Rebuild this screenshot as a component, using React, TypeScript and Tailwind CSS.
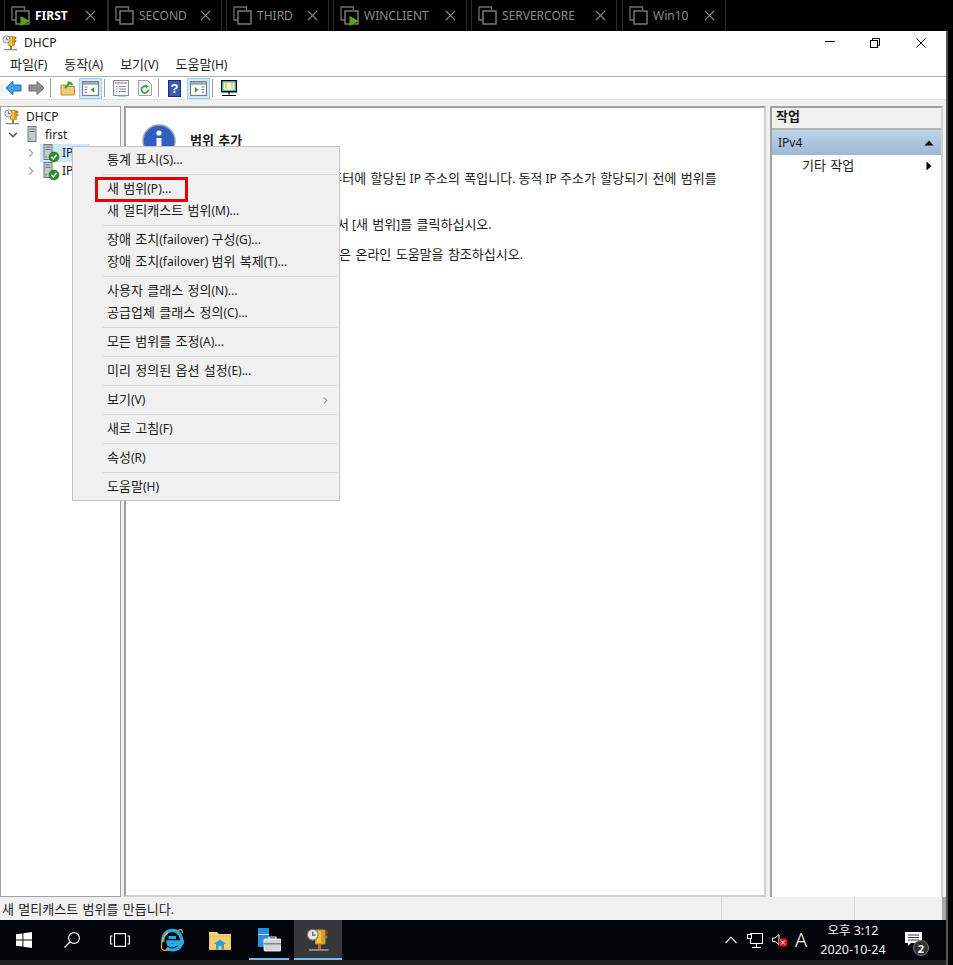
import { ChevronDown, ChevronRight, X } from "lucide-react";

const tabs = [
  { name: "FIRST", width: "w-[104px]", gap: "mr-0", close: "pr-[8px]", running: true, active: true },
  { name: "SECOND", width: "w-[114px]", gap: "mr-[4px]", close: "pr-[7px]" },
  { name: "THIRD", width: "w-[103px]", gap: "mr-[4px]", close: "pr-[7px]" },
  { name: "WINCLIENT", width: "w-[134px]", gap: "mr-[4px]", close: "pr-[7px]", running: true },
  { name: "SERVERCORE", width: "w-[146px]", gap: "mr-[5px]", close: "pr-[7px]" },
  { name: "Win10", width: "w-[104px]", gap: "mr-0", close: "pr-[7px]" },
];

// Malgun hangul runs wider than Noto at the same size, so hangul gets 13px
function T({ children }: { children: string }) {
  const parts = children.split(/([\uac00-\ud7a3]+(?: [\uac00-\ud7a3]+)*)/);
  return (
    <>
      {parts.map((part, i) =>
        i % 2 === 1 ? (
          <span key={i} className="text-[13px] [word-spacing:1px]">
            {part}
          </span>
        ) : (
          part
        ),
      )}
    </>
  );
}

function TabIcon({ running }: { running?: boolean }) {
  return (
    <svg width="20" height="20" viewBox="0 0 20 20" className="shrink-0" fill="none">
      <path d="M5 14H1V1H13.5V4" stroke="#6f6f6f" strokeWidth="1.3" />
      <rect x="5" y="5" width="13" height="13" stroke="#8a8a8a" strokeWidth="1.3" />
      {running ? <path d="M9.5 10L19 15L9.5 20Z" fill="#57a51b" /> : null}
    </svg>
  );
}

function Tab({ tab }: { tab: (typeof tabs)[number] }) {
  return (
    <div className={`${tab.width} ${tab.gap} ${tab.close} flex h-[31px] shrink-0 items-center border-x border-[#2b2b2b] pl-[6px]`}>
      <TabIcon running={tab.running} />
      <span className={`ml-[4px] truncate text-[12px] ${tab.active ? "font-bold text-white" : "text-[#8b8b8b]"}`}>{tab.name}</span>
      <X size={17} strokeWidth={1.6} className="ml-auto shrink-0 text-[#8a8a8a]" />
    </div>
  );
}

function DhcpIcon({ size = 16 }: { size?: number }) {
  return (
    <svg width={size} height={size} viewBox="0 0 16 16" className="shrink-0">
      <rect x="6" y="1" width="7" height="10" rx="1" fill="#d99b22" />
      <rect x="7" y="2" width="3" height="8" fill="#f3c548" />
      <circle cx="4.5" cy="4.5" r="3.6" fill="#e5e5e5" stroke="#777" strokeWidth="0.8" />
      <path d="M4.5 2.5V4.7H6.3" stroke="#555" strokeWidth="0.8" fill="none" />
      <circle cx="13.5" cy="3" r="1" fill="#d9352a" />
      <circle cx="13.5" cy="6" r="1" fill="#4b9e3a" />
      <rect x="8" y="11" width="2" height="3" fill="#a8761b" />
      <rect x="2" y="14" width="13" height="1.3" fill="#8a8a8a" />
    </svg>
  );
}

function ServerIcon({ ok }: { ok?: boolean }) {
  return (
    <svg width="18" height="19" viewBox="0 0 18 19" className="shrink-0">
      <rect x="2" y="0.5" width="8" height="15" fill="#c5c9cc" stroke="#70767a" />
      <rect x="3.5" y="2.5" width="5" height="1" fill="#6f7579" />
      <rect x="3.5" y="5" width="5" height="1" fill="#6f7579" />
      <rect x="3.5" y="12" width="1.5" height="1.5" fill="#5bb04a" />
      {ok ? (
        <>
          <circle cx="12" cy="13" r="5" fill="#2f8f2f" stroke="#1c6b1c" strokeWidth="0.6" />
          <path d="M9.5 13L11.3 15L14.5 11" stroke="#fff" strokeWidth="1.4" fill="none" />
        </>
      ) : null}
    </svg>
  );
}

function ToolbarIcons() {
  return (
    <div className="flex h-[22px] items-center pl-[5px]">
      <svg width="17" height="16" viewBox="0 0 17 16">
        <path d="M8 1.5V5H16V11H8V14.5L1 8Z" fill="#3ea2e8" stroke="#1f6fb5" strokeWidth="1" />
      </svg>
      <svg width="17" height="16" viewBox="0 0 17 16" className="ml-[6px]">
        <path d="M9 1.5V5H1V11H9V14.5L16 8Z" fill="#8e8e8e" stroke="#6e6e6e" strokeWidth="1" />
      </svg>
      <div className="ml-[5px] h-[18px] w-px bg-[#a0a0a0]" />
      <svg width="16" height="16" viewBox="0 0 16 16" className="ml-[9px]">
        <path d="M1 5H6L7 6.5H14.5V15H1Z" fill="#eccb75" stroke="#b59238" />
        <path d="M5 8L10 2.5M10 2.5L7.5 2.5M10 2.5L12.5 5" stroke="#3e9a32" strokeWidth="2" fill="none" />
      </svg>
      <div className="ml-[3px] flex h-[21px] w-[23px] items-center justify-center border border-[#99d1ff] bg-[#cce8ff]">
        <svg width="17" height="15" viewBox="0 0 16 14">
          <rect x="0.5" y="0.5" width="15" height="13" fill="#fff" stroke="#777" />
          <rect x="1" y="1" width="14" height="2.5" fill="#9aa6ad" />
          <path d="M2.5 5.5H5M2.5 8H5M2.5 10.5H5" stroke="#4a84bd" strokeWidth="1" />
          <path d="M11.5 5.5V11L8 8.2Z" fill="#35a03a" />
        </svg>
      </div>
      <div className="ml-[2px] h-[18px] w-px bg-[#a0a0a0]" />
      <svg width="16" height="17" viewBox="0 0 16 17" className="ml-[8px]">
        <rect x="0.5" y="0.5" width="15" height="15" fill="#f4f4f4" stroke="#8a8f93" />
        <rect x="2" y="2" width="12" height="2" fill="#b6bcc0" />
        <path d="M3 6.5H4.5M6 6.5H13M3 9H4.5M6 9H13M3 11.5H4.5M6 11.5H13" stroke="#8f959a" />
        <rect x="5" y="15" width="8" height="1.5" fill="#5aa7e0" />
      </svg>
      <svg width="14" height="16" viewBox="0 0 14 16" className="ml-[9px]">
        <path d="M0.5 0.5H9.5L13.5 4.5V15.5H0.5Z" fill="#f4f4f4" stroke="#a5a5a5" />
        <path d="M10.3 9.5A3.4 3.4 0 1 1 8.8 6.7" stroke="#3da343" strokeWidth="1.8" fill="none" />
        <path d="M7.5 4.6L10.8 6.3L7.8 8.4Z" fill="#3da343" />
      </svg>
      <div className="ml-[6px] h-[18px] w-px bg-[#a0a0a0]" />
      <div className="ml-[9px] flex h-[17px] w-[13px] items-center justify-center border border-[#1d2c7c] bg-[#3f58b4] text-[13px] font-bold leading-none text-white [font-family:'Liberation_Sans',sans-serif]">
        ?
      </div>
      <div className="ml-[6px] flex h-[21px] w-[23px] items-center justify-center border border-[#99d1ff] bg-[#cce8ff]">
        <svg width="17" height="15" viewBox="0 0 16 14">
          <rect x="0.5" y="0.5" width="15" height="13" fill="#fff" stroke="#777" />
          <rect x="1" y="1" width="14" height="2.5" fill="#9aa6ad" />
          <path d="M11 5.5H13.5M11 8H13.5M11 10.5H13.5" stroke="#4a84bd" strokeWidth="1" />
          <path d="M4.5 5.5V11L8 8.2Z" fill="#35a03a" />
        </svg>
      </div>
      <div className="ml-[2px] h-[18px] w-px bg-[#a0a0a0]" />
      <svg width="16" height="17" viewBox="0 0 16 17" className="ml-[8px]">
        <rect x="0.75" y="0.75" width="14.5" height="11" fill="#fff" stroke="#000" strokeWidth="1.5" />
        <rect x="2" y="2" width="12" height="8.5" fill="#f8f3b0" stroke="#27d0dc" />
        <path d="M5 3.5V9M11 3.5V9" stroke="#777" strokeDasharray="1 1" />
        <path d="M8 12V14.5M1 15.5H15" stroke="#000" strokeWidth="1.2" />
      </svg>
    </div>
  );
}

function TreePane() {
  return (
    <div className="h-full w-[121px] shrink-0 border border-[#a0a0a0] bg-white pt-px text-[12px] text-[#1a1a1a]">
      <div className="flex h-[18px] items-center pl-[3px]">
        <DhcpIcon />
        <span className="ml-[6px]">DHCP</span>
      </div>
      <div className="flex h-[18px] items-center pl-[5px]">
        <ChevronDown size={14} strokeWidth={2.2} className="text-[#444]" />
        <div className="ml-[6px] flex w-[15px]"><ServerIcon /></div>
        <span className="ml-[4px]">first</span>
      </div>
      <div className="flex h-[18px] items-center pl-[23px]">
        <ChevronRight size={14} strokeWidth={2} className="text-[#a6a6a6]" />
        <div className="ml-[2px] flex h-[18px] w-[50px] items-center bg-[#cce8ff] pl-[2px]">
          <ServerIcon ok />
          <span className="ml-[2px]">IPv4</span>
        </div>
      </div>
      <div className="flex h-[18px] items-center pl-[23px]">
        <ChevronRight size={14} strokeWidth={2} className="text-[#a6a6a6]" />
        <div className="ml-[4px] flex items-center">
          <ServerIcon ok />
          <span className="ml-[2px]">IPv6</span>
        </div>
      </div>
    </div>
  );
}

function CenterPane() {
  return (
    <div className="ml-[3px] h-full w-[642px] shrink-0 border-2 border-[#a0a0a0] border-b-[#d0d0d0] border-r-[#d0d0d0] bg-white pl-[16px] pt-[16px] text-[12px] text-[#1a1a1a]">
      <div className="flex items-center">
        <svg width="34" height="34" viewBox="0 0 34 34" className="shrink-0">
          <circle cx="17" cy="17" r="16" fill="#2f5fc0" stroke="#9aa3ad" strokeWidth="1.5" />
          <circle cx="17" cy="9" r="2.6" fill="#fff" />
          <rect x="14.5" y="14" width="5" height="13" fill="#fff" />
        </svg>
        <span className="ml-[14px] font-bold"><T>범위 추가</T></span>
      </div>
      <div className="ml-[48px] mt-[10px] whitespace-nowrap leading-[20px]">
        <p>
          <T>범위는 서브네트워크의 컴퓨터에 할당된 IP 주소의 폭입니다. 동적 IP 주소가 할당되기 전에 범위를</T>
          <br />
          <T>만들어야 합니다.</T>
        </p>
        <p className="mt-[4px]"><T>범위를 추가하려면 [동작]에서 [새 범위]를 클릭하십시오.</T></p>
        <p className="mt-[9px]"><T>범위 설정 관련 자세한 내용은 온라인 도움말을 참조하십시오.</T></p>
      </div>
    </div>
  );
}

function ActionPane() {
  return (
    <div className="ml-[4px] h-full w-[173px] shrink-0 border-2 border-b-0 border-[#a0a0a0] border-r-[#d0d0d0] bg-white text-[12px] text-[#1a1a1a]">
      <div className="flex h-[22px] items-center border-b-2 border-[#b5b5b5] bg-[#f0f0f0] pb-[2px] pl-[4px] font-bold"><T>작업</T></div>
      <div className="flex h-[25px] items-center justify-between bg-gradient-to-b from-[#bdd4ea] to-[#9db8d6] pl-[6px] pr-[7px]">
        <span>IPv4</span>
        <svg width="10" height="6" viewBox="0 0 10 6"><path d="M0.5 5.5H9.5L5 0.5Z" fill="#000" /></svg>
      </div>
      <div className="flex h-[22px] items-center justify-between pl-[30px] pr-[9px]">
        <span><T>기타 작업</T></span>
        <svg width="6" height="10" viewBox="0 0 6 10"><path d="M0.5 0.5V9.5L5.5 5Z" fill="#000" /></svg>
      </div>
    </div>
  );
}

type MenuEntry = { label?: string; arrow?: boolean };

const menu: MenuEntry[] = [
  { label: "통계 표시(S)..." },
  {},
  { label: "새 범위(P)..." },
  { label: "새 멀티캐스트 범위(M)..." },
  {},
  { label: "장애 조치(failover) 구성(G)..." },
  { label: "장애 조치(failover) 범위 복제(T)..." },
  {},
  { label: "사용자 클래스 정의(N)..." },
  { label: "공급업체 클래스 정의(C)..." },
  {},
  { label: "모든 범위를 조정(A)..." },
  {},
  { label: "미리 정의된 옵션 설정(E)..." },
  {},
  { label: "보기(V)", arrow: true },
  {},
  { label: "새로 고침(F)" },
  {},
  { label: "속성(R)" },
  {},
  { label: "도움말(H)" },
];

function ContextMenu() {
  return (
    <div className="absolute left-[72px] top-[146px] z-10 w-[268px] border border-[#c4c4c4] bg-[#f0f0f0] pb-[2px] pt-[2px] text-[12px] text-[#1a1a1a]">
      {menu.map((item, i) =>
        item.label ? (
          <div key={i} className="flex h-[22px] items-center justify-between pl-[34px] pr-[8px]">
            <span><T>{item.label}</T></span>
            {item.arrow ? <ChevronRight size={11} strokeWidth={1.6} className="text-[#333]" /> : null}
          </div>
        ) : (
          <div key={i} className="ml-[30px] mr-[2px] py-[3px]">
            <div className="h-px bg-[#d7d7d7]" />
          </div>
        ),
      )}
      <div className="absolute left-[22px] top-[30px] h-[25px] w-[93px] border-[3px] border-[#e60000]" />
    </div>
  );
}

function Taskbar() {
  return (
    <div className="flex h-[40px] items-center bg-[#02050a] text-white">
      <div className="flex w-[48px] justify-center">
        <svg width="16" height="16" viewBox="0 0 16 16" fill="#fff">
          <path d="M0 2.3L6.5 1.4V7.5H0ZM7.4 1.3L16 0V7.5H7.4ZM0 8.4H6.5V14.6L0 13.7ZM7.4 8.4H16V16L7.4 14.7Z" />
        </svg>
      </div>
      <div className="flex w-[48px] justify-center">
        <svg width="18" height="18" viewBox="0 0 18 18" fill="none" stroke="#fff" strokeWidth="1.2">
          <circle cx="11" cy="7" r="5.4" />
          <path d="M7 11L1.5 16.5" />
        </svg>
      </div>
      <div className="flex w-[48px] justify-center">
        <svg width="20" height="14" viewBox="0 0 20 14" fill="none" stroke="#fff" strokeWidth="1.2">
          <rect x="4.5" y="0.6" width="11" height="12.8" />
          <path d="M2.5 3H0.6V11H2.5M17.5 3H19.4V11H17.5" />
        </svg>
      </div>
      <div className="ml-[4px] flex w-[48px] justify-center">
        <svg width="24" height="24" viewBox="0 0 24 24" fill="none">
          <path d="M3 14C2 7 7 2 13 2.5C17 3 20 5 21 9L22.5 14H8C8 18 13 19 16 16H21.5C19 22 11 23.5 6.5 20" stroke="#27a9e1" strokeWidth="3.4" />
          <path d="M8.5 9.5H16" stroke="#27a9e1" strokeWidth="3" />
          <path d="M18 2.5C21 1 23 1.5 22 5M8 4C3 9 1 15 1.5 20C2 23 6 23 9 21" stroke="#e7b52b" strokeWidth="1.3" />
        </svg>
      </div>
      <div className="flex w-[48px] justify-center">
        <svg width="22" height="19" viewBox="0 0 22 19">
          <path d="M0 1H8L10 3H22V19H0Z" fill="#f6d27a" />
          <rect x="0" y="5" width="22" height="14" fill="#f4cd6e" stroke="#d6a53a" strokeWidth="0.6" />
          <path d="M7 18.5V13H4.5L11 8.5L17.5 13H15V18.5H12.5V15H9.5V18.5Z" fill="#2b9fe0" />
        </svg>
      </div>
      <div className="relative ml-[5px] flex h-full w-[40px] items-center justify-center">
        <svg width="24" height="24" viewBox="0 0 24 24">
          <rect x="1" y="0" width="11" height="19" fill="#2e8fe0" />
          <rect x="1" y="6" width="11" height="1" fill="#bfe0f7" />
          <rect x="7" y="11" width="17" height="12" rx="1" fill="#cfd6db" stroke="#fff" strokeWidth="0.8" />
          <rect x="7" y="15" width="17" height="1.5" fill="#7b8a94" />
          <rect x="12" y="9" width="7" height="2" fill="none" stroke="#fff" />
        </svg>
        <div className="absolute inset-x-0 bottom-0 h-[2px] bg-[#76b9ed]" />
      </div>
      <div className="relative ml-[5px] flex h-full w-[48px] items-center justify-center bg-[#36373b]">
        <DhcpIcon size={24} />
        <div className="absolute inset-x-0 bottom-0 h-[2px] bg-[#76b9ed]" />
      </div>
      <div className="ml-auto flex h-full items-center">
        <svg width="12" height="8" viewBox="0 0 12 8" fill="none" stroke="#fff" strokeWidth="1.1">
          <path d="M0.5 7L6 1.2L11.5 7" />
        </svg>
        <svg width="16" height="15" viewBox="0 0 16 15" fill="none" stroke="#fff" className="ml-[10px]">
          <rect x="3.5" y="0.5" width="12" height="10" />
          <rect x="0.5" y="1.5" width="4" height="4" fill="#02050a" />
          <path d="M9.5 11V14M5 14.5H14" />
        </svg>
        <svg width="17" height="14" viewBox="0 0 17 14" className="ml-[9px]">
          <path d="M0.5 5H3L7 1.5V11.5L3 8.5H0.5Z" fill="none" stroke="#fff" />
          <rect x="7" y="5.5" width="8" height="8" rx="1.5" fill="#e81123" />
          <path d="M9 7.5L13 11.5M13 7.5L9 11.5" stroke="#fff" />
        </svg>
        <span className="ml-[5px] w-[14px] text-center text-[20px] font-light leading-none">A</span>
        <div className="ml-[7px] w-[76px] text-center text-[12.5px] leading-[19px] text-[#f0f0f0]">
          <div className="mt-[-1px]">오후 3:12</div>
          <div>2020-10-24</div>
        </div>
        <div className="relative ml-[14px] mr-[17px] h-[24px] w-[24px]">
          <svg width="17" height="15" viewBox="0 0 17 15" fill="#fff" className="absolute left-0 top-[4px]">
            <path d="M0 0H17V11H6L3 14V11H0Z" />
            <path d="M3 3H14M3 5.5H14M3 8H14" stroke="#02050a" strokeWidth="0.8" />
          </svg>
          <div className="absolute left-[8px] top-[12px] flex h-[16px] w-[16px] items-center justify-center rounded-full border border-[#777] bg-[#333] text-[11px] font-bold leading-none">
            2
          </div>
        </div>
      </div>
    </div>
  );
}

export default function App() {
  return (
    <div className="relative h-[965px] w-[953px] overflow-hidden bg-black [font-family:'Noto_Sans','Noto_Sans_CJK_KR',sans-serif]">
      <div className="flex h-[31px] bg-black pl-[4px]">
        {tabs.map((tab) => (
          <Tab key={tab.name} tab={tab} />
        ))}
      </div>

      <div className="flex h-[934px]">
        <div className="flex w-[946px] flex-col">
          <div className="flex h-[889px] flex-col bg-white">
            <div className="flex h-[22px] items-center pl-[2px] pt-px text-[12px] text-[#1a1a1a]">
              <DhcpIcon />
              <span className="ml-[6px]">DHCP</span>
              <div className="ml-auto flex items-center pr-[20px]">
                <svg width="10" height="2" viewBox="0 0 10 2" className="mt-[-2px]"><rect width="10" height="1" fill="#000" /></svg>
                <svg width="10" height="10" viewBox="0 0 10 10" fill="none" stroke="#000" className="ml-[35px]">
                  <rect x="0.5" y="2.5" width="7" height="7" />
                  <path d="M2.5 2.5V0.5H9.5V7.5H7.5" />
                </svg>
                <svg width="10" height="10" viewBox="0 0 10 10" fill="none" stroke="#000" className="ml-[36px]">
                  <path d="M0.5 0.5L9.5 9.5M9.5 0.5L0.5 9.5" />
                </svg>
              </div>
            </div>
            <div className="flex h-[24px] items-center gap-[17px] border-b border-[#b4b4b4] pl-[10px] text-[12px] text-[#1a1a1a]">
              <span><T>파일(F)</T></span>
              <span><T>동작(A)</T></span>
              <span><T>보기(V)</T></span>
              <span><T>도움말(H)</T></span>
            </div>
            <div className="flex h-[23px] items-center border-b border-[#e0e0e0]">
              <ToolbarIcons />
            </div>

            <div className="flex min-h-0 flex-1 flex-col bg-[#f0f0f0]">
              <div className="flex min-h-0 flex-1 pt-[6px]">
                <TreePane />
                <CenterPane />
                <ActionPane />
              </div>
              <div className="flex h-[23px] items-center text-[12px] text-[#1a1a1a]">
                <span className="w-[721px] pl-[2px] pt-[2px]"><T>새 멀티캐스트 범위를 만듭니다.</T></span>
                <div className="h-full w-[133px] border-l border-[#d8d8d8]" />
                <div className="h-full flex-1 border-l border-[#d8d8d8]" />
                <div className="h-full w-[4px] bg-[#a8a8a8]" />
              </div>
            </div>
          </div>
          <Taskbar />
          <div className="h-[5px] bg-[#222]" />
        </div>
        <div className="flex-1 border-l-2 border-[#555] bg-black" />
      </div>

      <ContextMenu />
    </div>
  );
}
